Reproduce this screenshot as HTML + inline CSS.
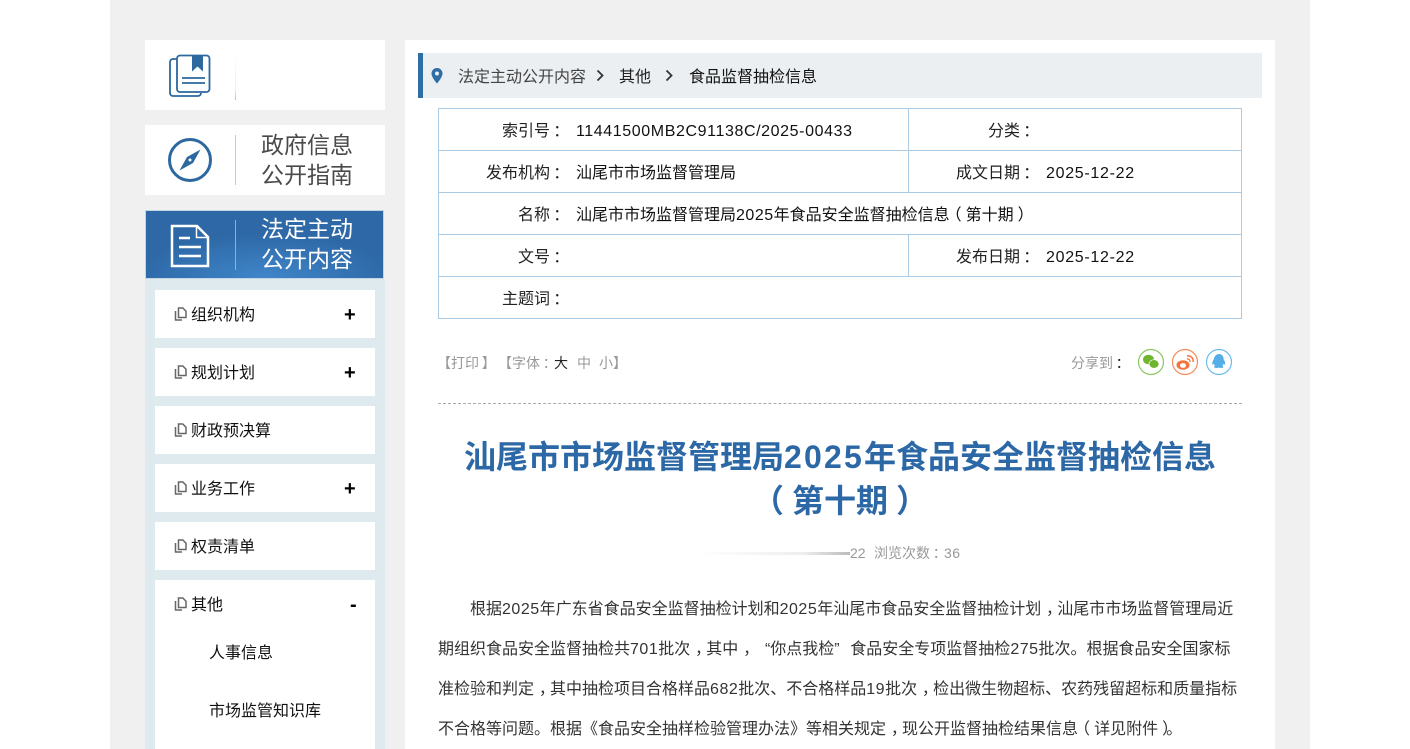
<!DOCTYPE html>
<html lang="zh"><head><meta charset="utf-8"><title>汕尾市市场监督管理局2025年食品安全监督抽检信息(第十期)</title>
<style>
*{box-sizing:border-box}
html,body{margin:0;padding:0;width:1410px;height:749px;overflow:hidden;background:#fff;font-family:"Liberation Sans","Noto Sans CJK SC",sans-serif}
.a{position:absolute}
.t{position:absolute;white-space:nowrap;line-height:20px;font-size:16px}
.c{position:relative;left:.3em}
.k{position:relative;left:.2em}
.l{position:relative;left:-.25em}
.r{position:relative;left:.25em}
.ql{display:inline-block;width:1em;text-align:right}
.qr{display:inline-block;width:1em;text-align:left}
.n{letter-spacing:.5px}
.n2{letter-spacing:.7px}
.d{letter-spacing:2.2px}
#wrap{position:absolute;left:110px;top:0;width:1200px;height:749px;background:#f0f0f0}
.card{position:absolute;left:145px;width:240px;height:70px;background:#fff}
.sep{position:absolute;left:235px;width:1px;height:50px;background:#c8c8c8}
.big{position:absolute;left:261px;font-size:23px;line-height:30px;color:#4a4a4a;white-space:nowrap}
.mi{position:absolute;left:155px;width:220px;height:48px;background:#fff}
.mt{position:absolute;left:191px;font-size:16px;line-height:20px;color:#111;white-space:nowrap}
.pl{position:absolute;left:344px;font-size:20px;line-height:20px;font-weight:bold;color:#000}
.h{position:absolute;background:#a9cbe6}
.lb{position:absolute;font-size:16px;line-height:20px;color:#222;white-space:nowrap;text-align:right}
.v{position:absolute;font-size:16px;line-height:20px;color:#111;white-space:nowrap}
.p{position:absolute;left:438px;font-size:16px;line-height:20px;color:#333;white-space:nowrap}
</style></head><body>
<div id="wrap"></div>
<div class="card" style="top:40px"></div>
<svg class="a" style="left:168px;top:53px" width="44" height="46" viewBox="0 0 44 46" fill="none" stroke="#2d689f" stroke-width="1.800"><path d="M9 6H5a3 3 0 0 0-3 3v31a3 3 0 0 0 3 3h25a3 3 0 0 0 3-3"/><rect x="9" y="2.500" width="32.500" height="36.500" rx="3" fill="#fff"/><path d="M24 2.500h11v16l-5.500-5-5.500 5z" fill="#2d689f" stroke="none"/><path d="M14 25h23M14 30h23"/></svg>
<div class="a" style="left:235px;top:50px;width:1px;height:50px;background:linear-gradient(#fff,#eee 80%,#bbb)"></div>

<div class="card" style="top:125px"></div>
<svg class="a" style="left:167px;top:137px" width="46" height="46" viewBox="0 0 46 46" fill="none"><circle cx="23" cy="23" r="20.500" stroke="#2d689f" stroke-width="3"/><path d="M33.500 12.500 26 26 12.500 33.500 20 20z" fill="#2d689f"/><circle cx="23" cy="23" r="1.500" fill="#fff"/></svg>
<div class="sep" style="top:135px"></div>
<div class="big" style="top:130px">政府信息</div>
<div class="big" style="top:160px">公开指南</div>

<div class="a" style="left:145px;top:210px;width:239px;height:69px;border:1px solid #c4d5e6;background:radial-gradient(ellipse 130px 45px at 50% 100%,#3f86c9,#2e68a6 100%)"></div>
<svg class="a" style="left:170px;top:224px" width="40" height="44" viewBox="0 0 40 44" fill="none" stroke="#fff" stroke-width="2.500"><path d="M2 2h25l11 11v29H2z"/><path d="M26.500 2v11.500H38" stroke-width="1.500"/><path d="M9 14h11M9 23h22M9 32h22"/></svg>
<div class="sep" style="top:220px;background:#8fb0d2"></div>
<div class="big" style="top:214px;color:#fff">法定主动</div>
<div class="big" style="top:244px;color:#fff">公开内容</div>

<div class="a" style="left:145px;top:279px;width:240px;height:470px;background:#dfeaef"></div>
<div class="mi" style="top:290px"></div>
<div class="mi" style="top:348px"></div>
<div class="mi" style="top:406px"></div>
<div class="mi" style="top:464px"></div>
<div class="mi" style="top:522px"></div>
<div class="mi" style="top:580px;height:169px"></div>

<svg width="0" height="0" style="position:absolute"><symbol id="d" viewBox="0 0 13 14"><path d="M4.500 1h4.300l3.200 3.200V10.500H4.500z M1.500 4V13H8" fill="none" stroke="#666" stroke-width="1.500"/></symbol></svg>
<svg class="a" style="left:174px;top:307px" width="13" height="14"><use href="#d"/></svg>
<svg class="a" style="left:174px;top:365px" width="13" height="14"><use href="#d"/></svg>
<svg class="a" style="left:174px;top:423px" width="13" height="14"><use href="#d"/></svg>
<svg class="a" style="left:174px;top:481px" width="13" height="14"><use href="#d"/></svg>
<svg class="a" style="left:174px;top:539px" width="13" height="14"><use href="#d"/></svg>
<svg class="a" style="left:174px;top:597px" width="13" height="14"><use href="#d"/></svg>
<div class="mt" style="top:306px">组织机构</div>
<div class="mt" style="top:364px">规划计划</div>
<div class="mt" style="top:422px">财政预决算</div>
<div class="mt" style="top:480px">业务工作</div>
<div class="mt" style="top:538px">权责清单</div>
<div class="mt" style="top:596px">其他</div>
<div class="mt" style="top:644px;left:209px">人事信息</div>
<div class="mt" style="top:702px;left:209px">市场监管知识库</div>
<div class="pl" style="top:305px">+</div>
<div class="pl" style="top:363px">+</div>
<div class="pl" style="top:479px">+</div>
<div class="pl" style="top:595px;left:350px">-</div>

<div class="a" style="left:405px;top:40px;width:870px;height:709px;background:#fff"></div>
<div class="a" style="left:418px;top:53px;width:844px;height:45px;background:#ebeff2;border-left:5px solid #2d6ea5"></div>
<svg class="a" style="left:431px;top:68px" width="12" height="16" viewBox="0 0 12 16"><path fill-rule="evenodd" d="M6 0a5.500 5.500 0 0 1 5.500 5.500C11.500 9.500 6 15.500 6 15.500S.5 9.500.5 5.500A5.500 5.500 0 0 1 6 0zm0 3.500a2 2 0 1 0 0 4 2 2 0 0 0 0-4z" fill="#2d6ea5"/></svg>
<div class="t" style="left:458px;top:68px;color:#444">法定主动公开内容</div>
<svg class="a" style="left:596px;top:69px" width="9" height="13" fill="none" stroke="#333" stroke-width="1.800"><path d="M1.500 1.500 6.500 6.500 1.500 11.500"/></svg>
<div class="t" style="left:619px;top:68px;color:#222">其他</div>
<svg class="a" style="left:665px;top:69px" width="9" height="13" fill="none" stroke="#333" stroke-width="1.800"><path d="M1.500 1.500 6.500 6.500 1.500 11.500"/></svg>
<div class="t" style="left:689px;top:68px;color:#111">食品监督抽检信息</div>

<div class="a" style="left:438px;top:108px;width:804px;height:211px;border:1px solid #a9cbe6"></div>
<div class="h" style="left:438px;top:150px;width:804px;height:1px"></div>
<div class="h" style="left:438px;top:192px;width:804px;height:1px"></div>
<div class="h" style="left:438px;top:234px;width:804px;height:1px"></div>
<div class="h" style="left:438px;top:276px;width:804px;height:1px"></div>
<div class="h" style="left:908px;top:108px;width:1px;height:84px"></div>
<div class="h" style="left:908px;top:234px;width:1px;height:42px"></div>

<div class="lb" style="left:502px;top:122px">索引号<span class="k">：</span></div>
<div class="v" style="left:576px;top:122px;letter-spacing:.6px">11441500MB2C91138C/2025-00433</div>
<div class="lb" style="left:988px;top:122px">分类<span class="k">：</span></div>
<div class="lb" style="left:486px;top:164px">发布机构<span class="k">：</span></div>
<div class="v" style="left:576px;top:164px">汕尾市市场监督管理局</div>
<div class="lb" style="left:956px;top:164px">成文日期<span class="k">：</span></div>
<div class="v n2" style="left:1046px;top:164px">2025-12-22</div>
<div class="lb" style="left:518px;top:206px">名称<span class="k">：</span></div>
<div class="v" style="left:576px;top:206px">汕尾市市场监督管理局<span class="n">2025</span>年食品安全监督抽检信息<span class="l">（</span>第十期<span class="r">）</span></div>
<div class="lb" style="left:518px;top:248px">文号<span class="k">：</span></div>
<div class="lb" style="left:956px;top:248px">发布日期<span class="k">：</span></div>
<div class="v n2" style="left:1046px;top:248px">2025-12-22</div>
<div class="lb" style="left:502px;top:290px">主题词<span class="k">：</span></div>

<div class="t" style="left:437px;top:353px;font-size:14px;color:#999">【打印<span class="k">】</span></div>
<div class="t" style="left:498px;top:353px;font-size:14px;color:#999">【字体<span class="k">：</span></div>
<div class="t" style="left:554px;top:353px;font-size:14px;color:#222">大</div>
<div class="t" style="left:577px;top:353px;font-size:14px;color:#999">中</div>
<div class="t" style="left:599px;top:353px;font-size:14px;color:#999">小</div>
<div class="t" style="left:613px;top:353px;font-size:14px;color:#999">】</div>
<div class="t" style="left:1071px;top:353px;font-size:14px;color:#999">分享到<span class="k" style="color:#222">：</span></div>

<svg class="a" style="left:1137px;top:348px" width="28" height="28" viewBox="0 0 28 28"><circle cx="14" cy="14" r="12.500" fill="#fff" stroke="#8cc762" stroke-width="1.200"/><ellipse cx="11.500" cy="11.500" rx="5.500" ry="4.800" fill="#6fb52f"/><ellipse cx="17" cy="16" rx="5" ry="4.300" fill="#6fb52f" stroke="#fff" stroke-width=".7"/></svg>
<svg class="a" style="left:1171px;top:348px" width="28" height="28" viewBox="0 0 28 28"><circle cx="14" cy="14" r="12.500" fill="#fff" stroke="#f58a5c" stroke-width="1.200"/><ellipse cx="12" cy="17" rx="6.500" ry="4.800" fill="#f4743f"/><ellipse cx="12" cy="17.500" rx="3" ry="2.400" fill="#fff"/><path d="M16 8a5 5 0 0 1 6 6" fill="none" stroke="#f4743f" stroke-width="1.500"/><path d="M16 11a2.500 2.500 0 0 1 3 3" fill="none" stroke="#f4743f" stroke-width="1.300"/></svg>
<svg class="a" style="left:1205px;top:348px" width="28" height="28" viewBox="0 0 28 28"><circle cx="14" cy="14" r="12.500" fill="#fff" stroke="#6cbbec" stroke-width="1.200"/><path d="M14 6c3.200 0 4.600 2.500 4.700 5.500.9 1.500 1.800 3.300 1.500 5-.7.300-1.300-.5-1.600-1-.2 1-.7 1.800-1.300 2.400.8.500 1.300 1 .9 1.600-.8.600-3.500.6-4.500 0-1 .6-3.700.6-4.500 0-.4-.6.100-1.100.9-1.600-.6-.6-1.100-1.400-1.300-2.400-.3.500-.9 1.300-1.600 1-.3-1.700.6-3.500 1.500-5C9.400 8.500 10.800 6 14 6z" fill="#55aee8"/></svg>

<div class="a" style="left:438px;top:403px;width:804px;height:0;border-top:1px dashed #aaa"></div>

<div class="a" style="left:438px;top:435px;width:804px;text-align:center;font-size:32px;line-height:44px;font-weight:bold;color:#2d68a6">汕尾市市场监督管理局<span class="d">2025</span>年食品安全监督抽检信息<br><span class="l">（</span>第十期<span class="r">）</span></div>

<div class="a" style="left:695px;top:552px;width:155px;height:3px;background:linear-gradient(90deg,#fff,#eee 70%,#bbb)"></div>
<div class="t" style="left:850px;top:543px;font-size:14px;color:#999">22</div>
<div class="t" style="left:874px;top:543px;font-size:14px;color:#999">浏览次数<span class="k">：</span><span class="n">36</span></div>

<div class="p" style="left:470px;top:600px">根据<span class="n">2025</span>年广东省食品安全监督抽检计划和<span class="n">2025</span>年汕尾市食品安全监督抽检计划<span class="c">，</span>汕尾市市场监督管理局近</div>
<div class="p" style="top:640px">期组织食品安全监督抽检共<span class="n">701</span>批次<span class="c">，</span>其中<span class="c">，</span><span class="ql">“</span>你点我检<span class="qr">”</span>食品安全专项监督抽检<span class="n">275</span>批次。根据食品安全国家标</div>
<div class="p" style="top:680px">准检验和判定<span class="c">，</span>其中抽检项目合格样品<span class="n">682</span>批次、不合格样品<span class="n">19</span>批次<span class="c">，</span>检出微生物超标、农药残留超标和质量指标</div>
<div class="p" style="top:720px">不合格等问题。根据《食品安全抽样检验管理办法》等相关规定<span class="c">，</span>现公开监督抽检结果信息<span class="l">（</span>详见附件<span class="r">）</span>。</div>
</body></html>
